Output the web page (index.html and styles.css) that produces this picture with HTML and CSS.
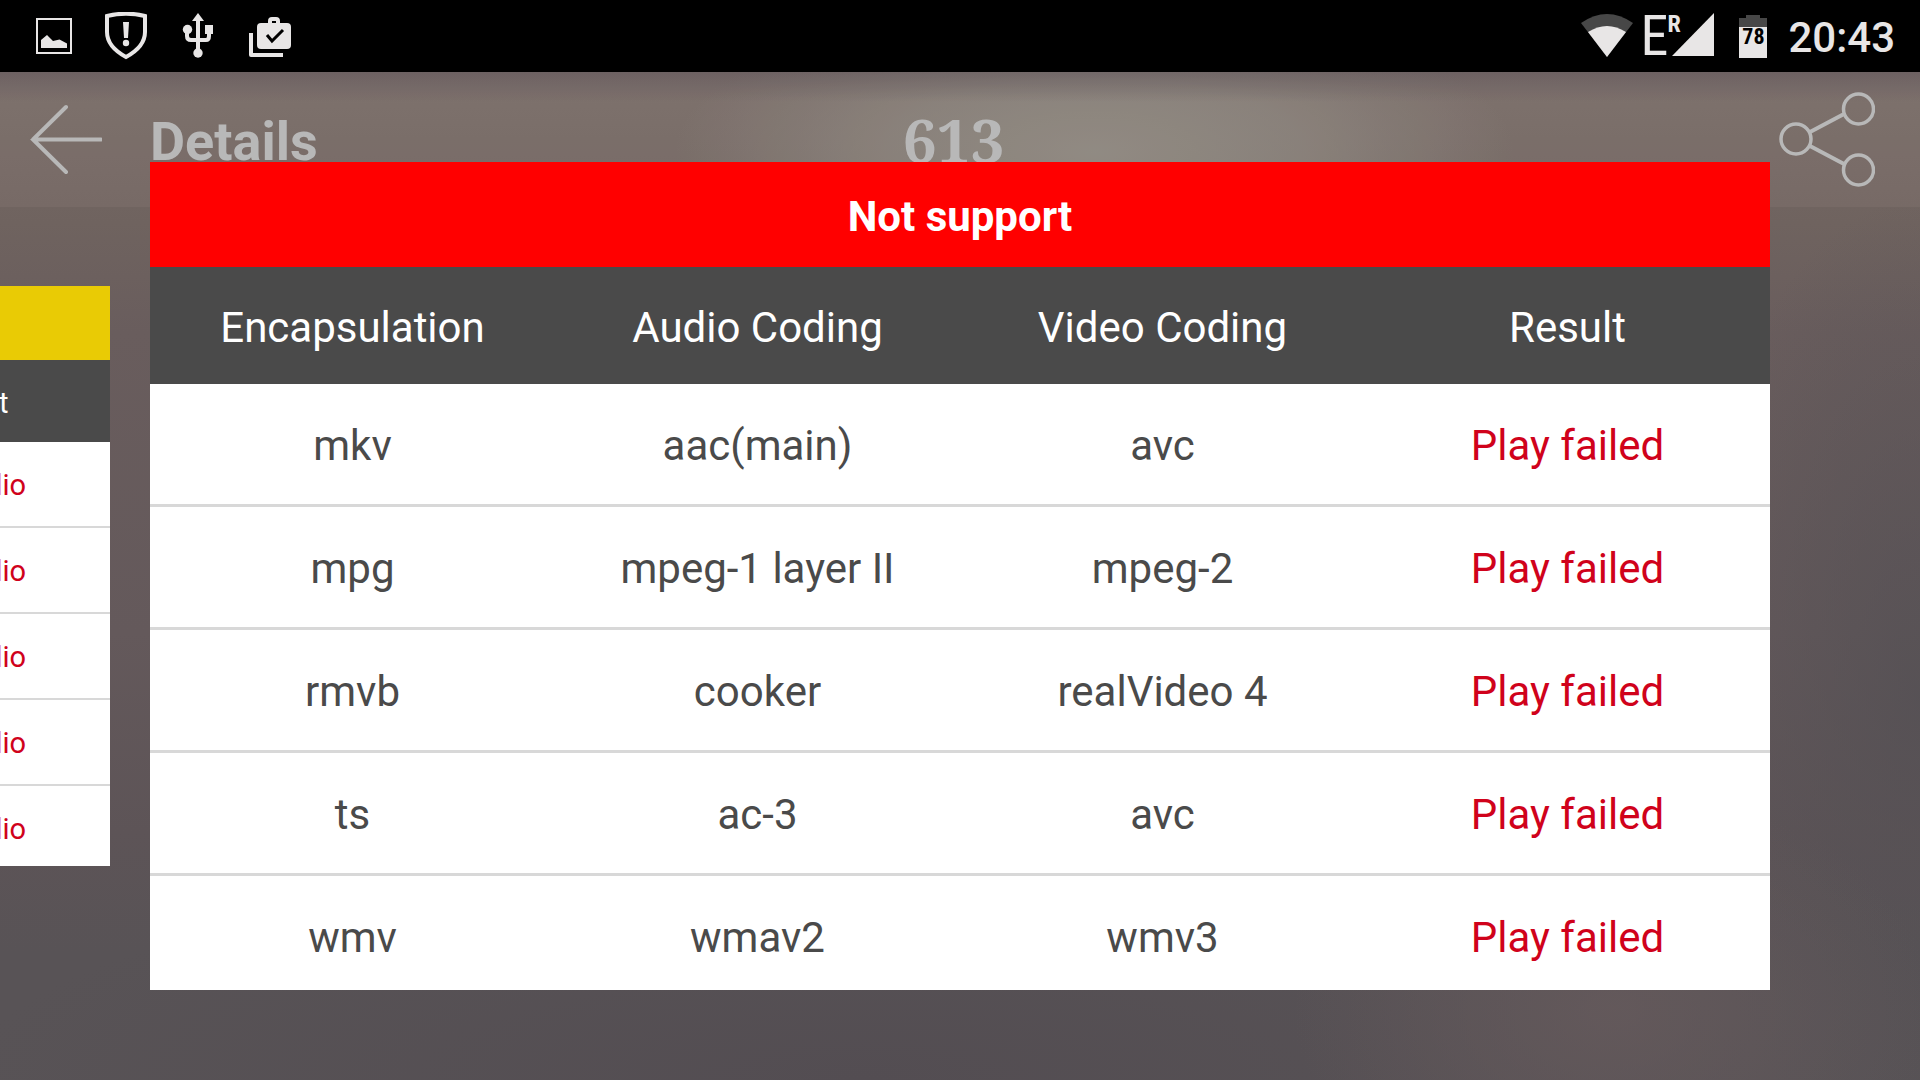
FILE: index.html
```html
<!DOCTYPE html>
<html lang="en">
<head>
    <meta charset="utf-8">
    <title>Details</title>
    <meta name="viewport" content="width=device-width, initial-scale=1.0">
    <link rel="stylesheet" href="styles.css">
</head>
<body>

<!-- Status bar -->
<div class="status-bar">
    <div class="status-left">
        <svg class="status-icon" viewBox="0 0 48 48">
            <rect x="7" y="7" width="34" height="34" fill="none" stroke="#e8e6e6" stroke-width="2"/>
            <path d="M11 36V28L17 23L23 29L29.500 27.500L37 31.500V36Z" fill="#e8e6e6"/>
        </svg>
        <svg class="status-icon" viewBox="0 0 48 48">
            <path d="M5 4C17 1 31 1 43 4V20C43 31 35 39 24 45C13 39 5 31 5 20Z" fill="none" stroke="#e8e6e6" stroke-width="4"/>
            <path d="M21 10H27L26 26H22Z" fill="#e8e6e6"/>
            <circle cx="24" cy="31" r="3.200" fill="#e8e6e6"/>
        </svg>
        <svg class="status-icon" viewBox="0 0 48 48">
            <path d="M24 6V41M13 18V24Q13 28 17 28H32Q35 28 35 24V18" fill="none" stroke="#e8e6e6" stroke-width="4"/>
            <path d="M24 1L30 9H18Z" fill="#e8e6e6"/>
            <circle cx="13.500" cy="17.500" r="4.700" fill="#e8e6e6"/>
            <rect x="31" y="13" width="8" height="9" fill="#e8e6e6"/>
            <circle cx="24" cy="41" r="4.700" fill="#e8e6e6"/>
        </svg>
        <svg class="status-icon" viewBox="0 0 48 48">
            <path d="M5 21V43H37" fill="none" stroke="#e8e6e6" stroke-width="4" stroke-linejoin="round"/>
            <path d="M24 12V9Q24 7 26 7H30Q32 7 32 9V12" fill="none" stroke="#e8e6e6" stroke-width="4"/>
            <rect x="11" y="11" width="34" height="26" rx="4" fill="#e8e6e6"/>
            <path d="M21 23L26 29L37 18" fill="none" stroke="#000" stroke-width="3"/>
        </svg>
    </div>
    <div class="status-right">
        <svg class="wifi-icon" viewBox="0 0 54 48">
            <path d="M1 11Q27 -7 53 11L27 45Z" fill="#474747"/>
            <path d="M8 20Q27 8 46 20L27 45Z" fill="#e8e6e6"/>
        </svg>
        <div class="network">
            <span class="network-type">E</span>
            <span class="network-roaming">R</span>
            <svg class="signal-icon" viewBox="0 0 42 48"><path d="M42 1V44H0Z" fill="#e8e6e6"/></svg>
        </div>
        <div class="battery">
            <svg class="battery-icon" viewBox="0 0 30 48">
                <path d="M8 3H22V6H29V16H1V6H8Z" fill="#474747"/>
                <path d="M1 15H29V46H1Z" fill="#e8e6e6"/>
            </svg>
            <span class="battery-level">78</span>
        </div>
        <span class="clock">20:43</span>
    </div>
</div>

<div class="screen">
    <div class="header">
        <button class="header-btn" type="button" aria-label="Back">
            <svg class="back-icon" viewBox="0 0 72 72">
                <path d="M36 3L3 35.500L36 68M3 35.500H71" fill="none" stroke="#b8b8b8" stroke-width="4" stroke-linecap="round"/>
            </svg>
        </button>
        <h1 class="title">Details</h1>
        <span class="score">613</span>
        <button class="header-btn header-btn-share" type="button" aria-label="Share">
            <svg class="share-icon" viewBox="0 0 96 96">
                <g fill="none" stroke="#b8b8b8" stroke-width="3.500">
                    <circle cx="17" cy="47" r="15"/>
                    <circle cx="79.500" cy="17" r="15"/>
                    <circle cx="79.500" cy="78" r="15"/>
                    <path d="M31 40L65 22M31 54L65 72" stroke-width="4"/>
                </g>
            </svg>
        </button>
    </div>

    <!-- Result cards -->
    <div class="cards">
        <div class="card card-prev">
            <div class="card-title"></div>
            <table class="results">
                <thead>
                    <tr><th>Result</th></tr>
                </thead>
                <tbody>
                    <tr><td class="failed">No audio</td></tr>
                    <tr><td class="failed">No audio</td></tr>
                    <tr><td class="failed">No audio</td></tr>
                    <tr><td class="failed">No audio</td></tr>
                    <tr><td class="failed">No audio</td></tr>
                </tbody>
            </table>
        </div>
        <div class="card card-current">
            <div class="card-title">Not support</div>
            <table class="results">
                <thead>
                    <tr><th>Encapsulation</th><th>Audio Coding</th><th>Video Coding</th><th>Result</th></tr>
                </thead>
                <tbody>
                    <tr><td>mkv</td><td>aac(main)</td><td>avc</td><td class="failed">Play failed</td></tr>
                    <tr><td>mpg</td><td>mpeg-1 layer II</td><td>mpeg-2</td><td class="failed">Play failed</td></tr>
                    <tr><td>rmvb</td><td>cooker</td><td>realVideo 4</td><td class="failed">Play failed</td></tr>
                    <tr><td>ts</td><td>ac-3</td><td>avc</td><td class="failed">Play failed</td></tr>
                    <tr><td>wmv</td><td>wmav2</td><td>wmv3</td><td class="failed">Play failed</td></tr>
                </tbody>
            </table>
        </div>
    </div>
</div>

</body>
</html>
```
FILE: styles.css
```css
html, body {
    height: 100%;
    margin: 0;
    overflow: hidden;
}

body {
    display: flex;
    flex-direction: column;
    font-family: Roboto, "Liberation Sans", sans-serif;
    font-size: 42px;
    color: #4a4a4a;
    background-color: #000;
}

svg {
    display: block;
}

/* Status bar */
.status-bar {
    display: flex;
    justify-content: space-between;
    align-items: center;
    height: 72px;
    padding: 0 25px 0 30px;
    color: #e8e6e6;
}

.status-left {
    display: flex;
    gap: 24px;
}

.status-right {
    display: flex;
    align-items: center;
}

.status-icon {
    width: 48px;
    height: 48px;
}

.wifi-icon {
    width: 54px;
    height: 48px;
    margin-right: 6px;
}

.network {
    display: flex;
    position: relative;
    align-items: center;
    width: 74px;
    height: 48px;
    margin-right: 24px;
}

.network-type {
    font-family: "Roboto Condensed", Roboto, sans-serif;
    font-size: 56px;
    line-height: 48px;
}

.network-roaming {
    position: absolute;
    left: 27px;
    top: 0;
    font-family: "Roboto Condensed", Roboto, sans-serif;
    font-size: 24px;
    font-weight: bold;
    line-height: 24px;
}

.signal-icon {
    position: absolute;
    right: 0;
    top: 0;
    width: 42px;
    height: 48px;
}

.battery {
    position: relative;
    width: 30px;
    margin-right: 20px;
}

.battery-icon {
    width: 30px;
    height: 48px;
}

.battery-level {
    position: absolute;
    left: 0;
    right: 0;
    top: 13px;
    font-family: "Roboto Condensed", Roboto, sans-serif;
    font-size: 22px;
    font-weight: bold;
    line-height: 24px;
    text-align: center;
    color: #000;
}

.clock {
    padding-top: 2px;
    font-weight: 500;
}

/* Blurred wallpaper */
.screen {
    position: relative;
    flex: 1;
    overflow: hidden;
    background:
        linear-gradient(rgba(88, 78, 84, 0.6), rgba(88, 78, 84, 0) 30px),
        radial-gradient(ellipse 420px 150px at 57% 80px, rgba(144, 140, 132, 0.9), rgba(144, 140, 132, 0.6) 50%, rgba(144, 140, 132, 0)),
        radial-gradient(ellipse 320px 220px at 84% 93%, rgba(102, 90, 92, 0.8), rgba(102, 90, 92, 0)),
        radial-gradient(ellipse 900px 220px at 45% 100%, #534d52, rgba(83, 77, 82, 0)),
        radial-gradient(ellipse 240px 500px at 100% 62%, rgba(84, 80, 84, 0.8), rgba(84, 80, 84, 0)),
        linear-gradient(#786c68 0, #6f635f 150px, #695d5d 260px, #64595b 560px, #5d5457 760px, #585356 880px, #585356 100%);
}

.header {
    display: grid;
    grid-template-columns: 150px 1fr auto 1fr 163px;
    align-items: center;
    height: 135px;
    background-color: rgba(170, 155, 145, 0.12);
    color: #b8b8b8;
}

.header-btn {
    padding: 0;
    border: 0;
    background: none;
    cursor: pointer;
}

.header-btn-share {
    grid-column: 5;
    justify-self: start;
}

.back-icon {
    width: 72px;
    height: 72px;
    margin-left: 30px;
}

.share-icon {
    width: 96px;
    height: 96px;
    margin-left: 22px;
}

.title {
    margin: 0;
    padding-top: 4px;
    font-size: 54px;
    font-weight: bold;
}

.score {
    font-family: "Noto Serif", "Liberation Serif", serif;
    font-size: 60px;
    font-weight: bold;
    line-height: 70px;
}

/* Cards */
.cards {
    position: absolute;
    top: 0;
    right: 150px;
    bottom: 0;
    left: -174px;
    display: flex;
    align-items: center;
    gap: 40px;
    pointer-events: none;
}

.card {
    box-sizing: border-box;
    overflow: hidden;
    background-color: #fff;
    pointer-events: auto;
}

.card-current {
    flex: 1;
    height: 828px;
}

.card-prev {
    width: 284px;
    height: 580px;
    font-size: 29px;
}

.card-title {
    height: 105px;
    line-height: 110px;
    text-align: center;
    font-weight: bold;
    color: #fff;
    background-color: #f00;
}

.card-prev .card-title {
    height: 74px;
    background-color: #e9cb05;
}

.results {
    width: 100%;
    table-layout: fixed;
    border-collapse: separate;
    border-spacing: 0;
    text-align: center;
}

.results th {
    height: 113px;
    padding: 4px 0 0;
    font-weight: normal;
    color: #fff;
    background-color: #4a4a4a;
}

.results td {
    height: 118px;
    padding: 2px 0 0;
    border-bottom: 3px solid #d8d8d8;
}

.card-prev .results th {
    height: 79px;
    padding-top: 3px;
}

.card-prev .results td {
    height: 82px;
    border-bottom-width: 2px;
}

.results .failed {
    color: #d0021b;
}
```
